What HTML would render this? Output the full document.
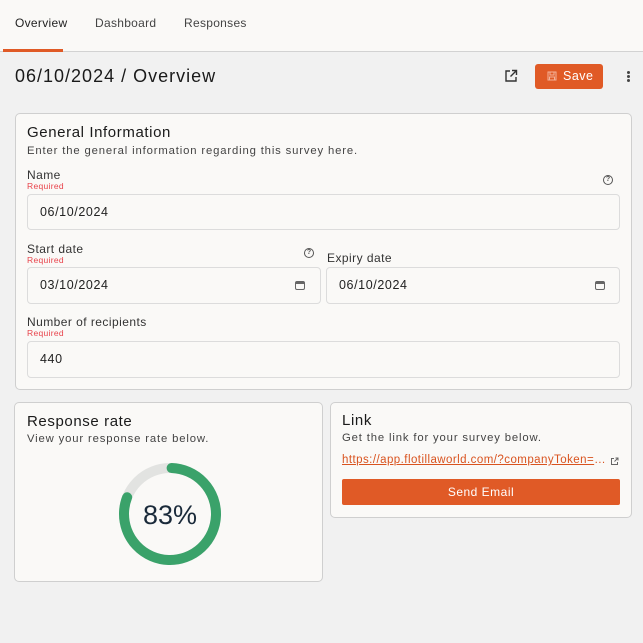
<!DOCTYPE html>
<html><head><meta charset="utf-8"><style>
*{box-sizing:border-box;margin:0;padding:0}
body{width:643px;height:643px;background:#f1f1f1;font-family:"Liberation Sans",sans-serif;color:#222;position:relative;overflow:hidden}
.a{position:absolute;white-space:nowrap}
.top{position:absolute;left:0;top:0;width:643px;height:52px;background:#faf9f7;border-bottom:1px solid #d2d2d2}
.card{position:absolute;background:#faf9f7;border:1px solid #cfcfcf;border-radius:5px}
.inp{position:absolute;background:#faf9f7;border:1px solid #dcdcdc;border-radius:4px;font-size:12.5px;color:#222;padding-left:12px;line-height:34px;letter-spacing:0.6px}
.lbl{font-size:12px;color:#333;letter-spacing:0.45px}
.req{font-size:8.5px;color:#e8434b;letter-spacing:0.3px}
.h{font-size:15px;color:#1a1a1a;letter-spacing:0.6px}
.sub{font-size:11.3px;color:#444;letter-spacing:0.85px}
.help{position:absolute;width:10px;height:10px;border:1px solid #555;border-radius:50%;font-size:7px;line-height:8px;text-align:center;color:#555;font-weight:bold}
.cal{position:absolute;width:10px;height:9px;border:1.5px solid #666;border-top-width:3px;border-radius:2px}
</style></head><body>
<div class="top"></div>
<div class="a" style="left:15px;top:16px;font-size:12px;color:#222;letter-spacing:0.3px">Overview</div>
<div class="a" style="left:95px;top:16px;font-size:12px;color:#444;letter-spacing:0.3px">Dashboard</div>
<div class="a" style="left:184px;top:16px;font-size:12px;color:#444;letter-spacing:0.3px">Responses</div>
<div class="a" style="left:3px;top:49px;width:60px;height:3px;background:#e05a26"></div>

<div class="a" style="left:15px;top:66px;font-size:18px;color:#1a1a1a;letter-spacing:1px">06/10/2024 / Overview</div>
<svg class="a" style="left:504px;top:69px" width="14" height="14" viewBox="0 0 14 14" fill="none" stroke="#333" stroke-width="1.4"><path d="M6 2H2v10h10V8"/><path d="M8 1.5h4.5V6M12.5 1.5L6.5 7.5"/></svg>
<div class="a" style="left:535px;top:64px;width:68px;height:25px;background:#e05a26;border-radius:3px"></div>
<svg class="a" style="left:547px;top:71px" width="10" height="10" viewBox="0 0 10 10" fill="none" stroke="#f3b39a" stroke-width="1"><rect x="1" y="1" width="8" height="8"/><rect x="3" y="1" width="4" height="3"/><rect x="2.5" y="6" width="5" height="3"/></svg>
<div class="a" style="left:563px;top:69px;font-size:12.5px;color:#fff;letter-spacing:0.5px">Save</div>
<div class="a" style="left:627px;top:71px;width:3px;height:3px;background:#444;border-radius:50%;box-shadow:0 4px 0 #444,0 8px 0 #444"></div>

<div class="card" style="left:15px;top:113px;width:617px;height:277px"></div>
<div class="a h" style="left:27px;top:124px">General Information</div>
<div class="a sub" style="left:27px;top:145px">Enter the general information regarding this survey here.</div>
<div class="a lbl" style="left:27px;top:168px">Name</div>
<div class="a req" style="left:27px;top:181px">Required</div>
<div class="help" style="left:603px;top:175px">?</div>
<div class="inp" style="left:27px;top:194px;width:593px;height:36px">06/10/2024</div>

<div class="a lbl" style="left:27px;top:242px">Start date</div>
<div class="a req" style="left:27px;top:255px">Required</div>
<div class="help" style="left:304px;top:248px">?</div>
<div class="inp" style="left:27px;top:267px;width:294px;height:37px">03/10/2024</div>
<div class="cal" style="left:295px;top:281px"></div>
<div class="a lbl" style="left:327px;top:251px">Expiry date</div>
<div class="inp" style="left:326px;top:267px;width:294px;height:37px">06/10/2024</div>
<div class="cal" style="left:595px;top:281px"></div>

<div class="a lbl" style="left:27px;top:315px">Number of recipients</div>
<div class="a req" style="left:27px;top:328px">Required</div>
<div class="inp" style="left:27px;top:341px;width:593px;height:37px">440</div>

<div class="card" style="left:14px;top:402px;width:309px;height:180px"></div>
<div class="a h" style="left:27px;top:413px">Response rate</div>
<div class="a sub" style="left:27px;top:433px">View your response rate below.</div>
<svg class="a" style="left:114px;top:458px" width="112" height="112" viewBox="0 0 112 112">
<circle cx="56" cy="56" r="46" fill="none" stroke="#e2e3e1" stroke-width="10"/>
<circle cx="56" cy="56" r="46" fill="none" stroke="#3aa26a" stroke-width="10" stroke-linecap="round" stroke-dasharray="232 289" transform="rotate(-88 56 56)"/>
<text x="56" y="66" text-anchor="middle" font-family="Liberation Sans,sans-serif" font-size="27" fill="#1a2a3a">83%</text>
</svg>

<div class="card" style="left:330px;top:402px;width:302px;height:116px"></div>
<div class="a h" style="left:342px;top:412px">Link</div>
<div class="a sub" style="left:342px;top:432px">Get the link for your survey below.</div>
<div class="a" style="left:342px;top:454px;font-size:11.5px;color:#d9531f;text-decoration:underline;width:265px;overflow:hidden;text-overflow:ellipsis;letter-spacing:0.45px">https://app.flotillaworld.com/?companyToken=abcdef</div>
<svg class="a" style="left:610px;top:457px" width="9" height="9" viewBox="0 0 9 9" fill="none" stroke="#666" stroke-width="1"><path d="M4 1.5H1.5v6h6V5"/><path d="M5.5 1h2.5v2.5M8 1L4.5 4.5"/></svg>
<div class="a" style="left:342px;top:479px;width:278px;height:26px;background:#e05a26;border-radius:2px;color:#fff;font-size:12px;text-align:center;line-height:26px;letter-spacing:0.5px">Send Email</div>
</body></html>
